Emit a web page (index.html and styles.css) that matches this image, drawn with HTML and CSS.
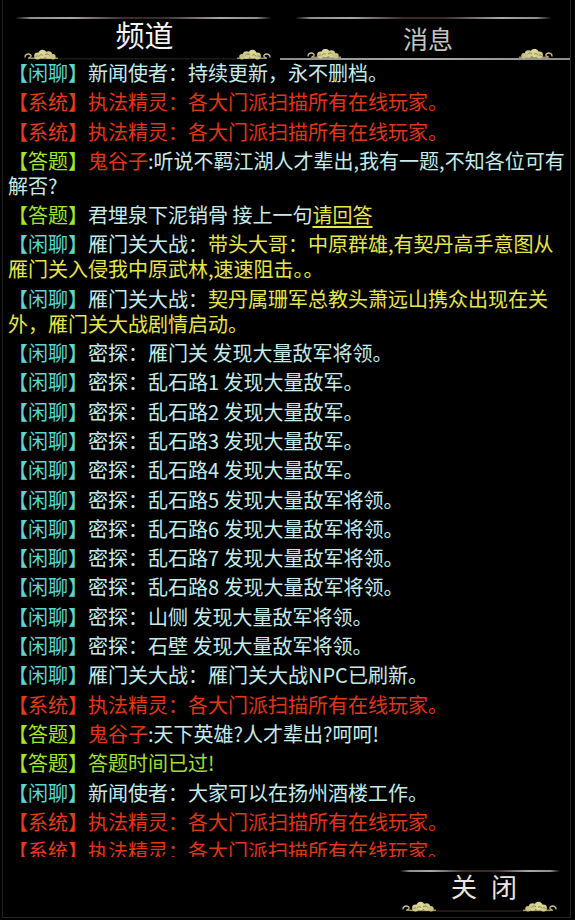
FILE: index.html
```html
<!DOCTYPE html>
<html lang="zh-CN">
<head>
<meta charset="utf-8">
<title>频道</title>
<link rel="stylesheet" href="styles.css">
</head>
<body>
<svg class="defs" width="0" height="0" aria-hidden="true">
  <defs>
    <g id="cloud">
      <path d="M1 8.5 C0.5 5.5 4 4 6.5 5.8 C8 7 6.5 9 5 8.2" fill="none" stroke="#cfc88a" stroke-width="1.3"/>
      <path d="M4 9.2 L34 9.2" stroke="#bdb77c" stroke-width="1.2"/>
      <circle cx="13.5" cy="7" r="3.4" fill="#d3cd8e"/>
      <circle cx="18.5" cy="5" r="4.2" fill="#dcd697"/>
      <circle cx="24.5" cy="6" r="3.8" fill="#d3cd8e"/>
      <circle cx="29" cy="7.8" r="2.7" fill="#c9c383"/>
      <path d="M15 7.5 C15.5 5.5 18 5 19 6.5 M21 6 C22 4.5 24.5 4.6 25.5 6.5 M11.5 8 C12 6.8 13.3 6.5 14 7.2" fill="none" stroke="#7c773f" stroke-width="0.8"/>
    </g>
  </defs>
</svg>
<div class="frame">
  <div class="tabs">
    <div class="tab tab-active">
      <div class="tab-top"></div>
      <div class="tab-label">频道</div>
      <svg class="tab-orn" width="257" height="11" viewBox="0 0 257 11">
        <rect x="20" y="9.3" width="217" height="1" fill="#2e2620"/>
        <use href="#cloud" x="9" y="0"/>
        <use href="#cloud" transform="translate(256,0) scale(-1,1)"/>
      </svg>
    </div>
    <div class="tab tab-idle">
      <div class="tab-top"></div>
      <div class="tab-label">消息</div>
      <svg class="tab-orn" width="290" height="11" viewBox="0 0 290 11">
        <defs>
          <linearGradient id="lineg" x1="0" x2="1" y1="0" y2="0">
            <stop offset="0" stop-color="#8c8c8c"/>
            <stop offset="0.5" stop-color="#a9a9a9"/>
            <stop offset="1" stop-color="#8c8c8c"/>
          </linearGradient>
        </defs>
        <rect x="0" y="9" width="290" height="2" fill="url(#lineg)"/>
        <use href="#cloud" x="27" y="-1"/>
        <use href="#cloud" transform="translate(273,-1) scale(-1,1)"/>
      </svg>
    </div>
  </div>

  <div class="log">
    <p class="msg"><span class="tag-chat">【闲聊】</span><span class="pale">新闻使者：持续更新，永不删档。</span></p>
    <p class="msg"><span class="tag-sys">【系统】</span><span class="red">执法精灵：各大门派扫描所有在线玩家。</span></p>
    <p class="msg"><span class="tag-sys">【系统】</span><span class="red">执法精灵：各大门派扫描所有在线玩家。</span></p>
    <p class="msg"><span class="tag-quiz">【答题】</span><span class="red">鬼谷子</span><span class="pale">:听说不羁江湖人才辈出,我有一题,不知各位可有解否?</span></p>
    <p class="msg"><span class="tag-quiz">【答题】</span><span class="pale">君埋泉下泥销骨 接上一句</span><span class="answer">请回答</span></p>
    <p class="msg"><span class="tag-chat">【闲聊】</span><span class="pale">雁门关大战：</span><span class="yellow">带头大哥：中原群雄,有契丹高手意图从雁门关入侵我中原武林,速速阻击。。</span></p>
    <p class="msg"><span class="tag-chat">【闲聊】</span><span class="pale">雁门关大战：</span><span class="yellow">契丹属珊军总教头萧远山携众出现在关外，雁门关大战剧情启动。</span></p>
    <p class="msg"><span class="tag-chat">【闲聊】</span><span class="pale">密探：雁门关 发现大量敌军将领。</span></p>
    <p class="msg"><span class="tag-chat">【闲聊】</span><span class="pale">密探：乱石路1 发现大量敌军。</span></p>
    <p class="msg"><span class="tag-chat">【闲聊】</span><span class="pale">密探：乱石路2 发现大量敌军。</span></p>
    <p class="msg"><span class="tag-chat">【闲聊】</span><span class="pale">密探：乱石路3 发现大量敌军。</span></p>
    <p class="msg"><span class="tag-chat">【闲聊】</span><span class="pale">密探：乱石路4 发现大量敌军。</span></p>
    <p class="msg"><span class="tag-chat">【闲聊】</span><span class="pale">密探：乱石路5 发现大量敌军将领。</span></p>
    <p class="msg"><span class="tag-chat">【闲聊】</span><span class="pale">密探：乱石路6 发现大量敌军将领。</span></p>
    <p class="msg"><span class="tag-chat">【闲聊】</span><span class="pale">密探：乱石路7 发现大量敌军将领。</span></p>
    <p class="msg"><span class="tag-chat">【闲聊】</span><span class="pale">密探：乱石路8 发现大量敌军将领。</span></p>
    <p class="msg"><span class="tag-chat">【闲聊】</span><span class="pale">密探：山侧 发现大量敌军将领。</span></p>
    <p class="msg"><span class="tag-chat">【闲聊】</span><span class="pale">密探：石壁 发现大量敌军将领。</span></p>
    <p class="msg"><span class="tag-chat">【闲聊】</span><span class="pale">雁门关大战：雁门关大战NPC已刷新。</span></p>
    <p class="msg"><span class="tag-sys">【系统】</span><span class="red">执法精灵：各大门派扫描所有在线玩家。</span></p>
    <p class="msg"><span class="tag-quiz">【答题】</span><span class="red">鬼谷子</span><span class="pale">:天下英雄?人才辈出?呵呵!</span></p>
    <p class="msg"><span class="tag-quiz">【答题】</span><span class="green">答题时间已过!</span></p>
    <p class="msg"><span class="tag-chat">【闲聊】</span><span class="pale">新闻使者：大家可以在扬州酒楼工作。</span></p>
    <p class="msg"><span class="tag-sys">【系统】</span><span class="red">执法精灵：各大门派扫描所有在线玩家。</span></p>
    <p class="msg"><span class="tag-sys">【系统】</span><span class="red">执法精灵：各大门派扫描所有在线玩家。</span></p>
  </div>

  <div class="footer">
    <div class="close-btn">
      <div class="close-top"></div>
      <div class="close-label">关闭</div>
      <svg class="close-orn" width="160" height="12" viewBox="0 0 160 12">
        <rect x="10" y="10.5" width="140" height="1" fill="#3a3024"/>
        <use href="#cloud" x="2" y="1"/>
        <use href="#cloud" transform="translate(157,1) scale(-1,1)"/>
      </svg>
    </div>
  </div>
</div>
</body>
</html>
```

FILE: styles.css
```css
html, body {
  margin: 0;
  padding: 0;
  background: #000;
}

body {
  width: 575px;
  height: 920px;
  overflow: hidden;
  font-family: "Noto Sans CJK SC", "Noto Sans", sans-serif;
}

.defs {
  position: absolute;
  width: 0;
  height: 0;
}

.frame {
  margin-left: 2px;
  width: 567px;
  height: 917px;
  border-left: 1px solid #1f1f1f;
  border-right: 1px solid #262626;
  border-bottom: 1px solid #262626;
  display: flex;
  flex-direction: column;
}

.tabs {
  display: flex;
  height: 60px;
  flex: none;
}

.tab {
  display: flex;
  flex-direction: column;
  height: 60px;
}

.tab-active {
  margin-left: 12px;
  width: 257px;
}

.tab-idle {
  margin-left: 8px;
  width: 290px;
}

.tab-top {
  margin-top: 17px;
  height: 2px;
  flex: none;
}

.tab-active .tab-top {
  background: linear-gradient(90deg, rgba(120,120,120,0) 0%, #8d8d8d 6%, #a8a8a8 22%, #3b2b27 42%, #3b2b27 58%, #a8a8a8 80%, #8d8d8d 94%, rgba(120,120,120,0) 100%);
}

.tab-idle .tab-top {
  margin-left: 15px;
  margin-right: 18px;
  background: linear-gradient(90deg, rgba(120,120,120,0) 0%, #8d8d8d 6%, #a8a8a8 22%, #3b2b27 42%, #3b2b27 58%, #a8a8a8 80%, #8d8d8d 94%, rgba(120,120,120,0) 100%);
}

.tab-label {
  height: 30px;
  text-align: center;
  flex: none;
}

.tab-active .tab-label {
  font-size: 29px;
  line-height: 31px;
  color: #f4f4f4;
  padding-left: 2px;
}

.tab-idle .tab-label {
  font-size: 25px;
  line-height: 38px;
  color: #c4c4c4;
  padding-left: 6px;
}

.tab-orn {
  display: block;
  flex: none;
}

.log {
  height: 797px;
  flex: none;
  overflow: hidden;
  padding-left: 5px;
}

.msg {
  margin: 0 0 4.3px;
  font-size: 20px;
  line-height: 25px;
  color: #c4ecec;
}

.tag-chat { color: #5ed6d0; }
.tag-sys { color: #e43b1d; }
.tag-quiz { color: #a0e62c; }
.pale { color: #c4ecec; }
.red { color: #e0361b; }
.yellow { color: #e6e64e; }
.green { color: #9fe032; }

.answer {
  color: #e6e64e;
  text-decoration: underline;
  text-underline-offset: 3px;
}

.footer {
  flex: 1;
  display: flex;
  justify-content: flex-end;
  padding-right: 10px;
}

.close-btn {
  width: 160px;
  display: flex;
  flex-direction: column;
}

.close-top {
  margin-top: 13px;
  height: 2px;
  background: linear-gradient(90deg, rgba(120,120,120,0) 0%, #8d8d8d 6%, #a8a8a8 20%, #3b2b27 40%, #3b2b27 60%, #a8a8a8 80%, #8d8d8d 94%, rgba(120,120,120,0) 100%);
}

.close-label {
  height: 28px;
  font-size: 26px;
  line-height: 28px;
  color: #ebe6de;
  text-align: center;
  letter-spacing: 14px;
  padding-left: 22px;
}

.close-orn {
  display: block;
}
```
